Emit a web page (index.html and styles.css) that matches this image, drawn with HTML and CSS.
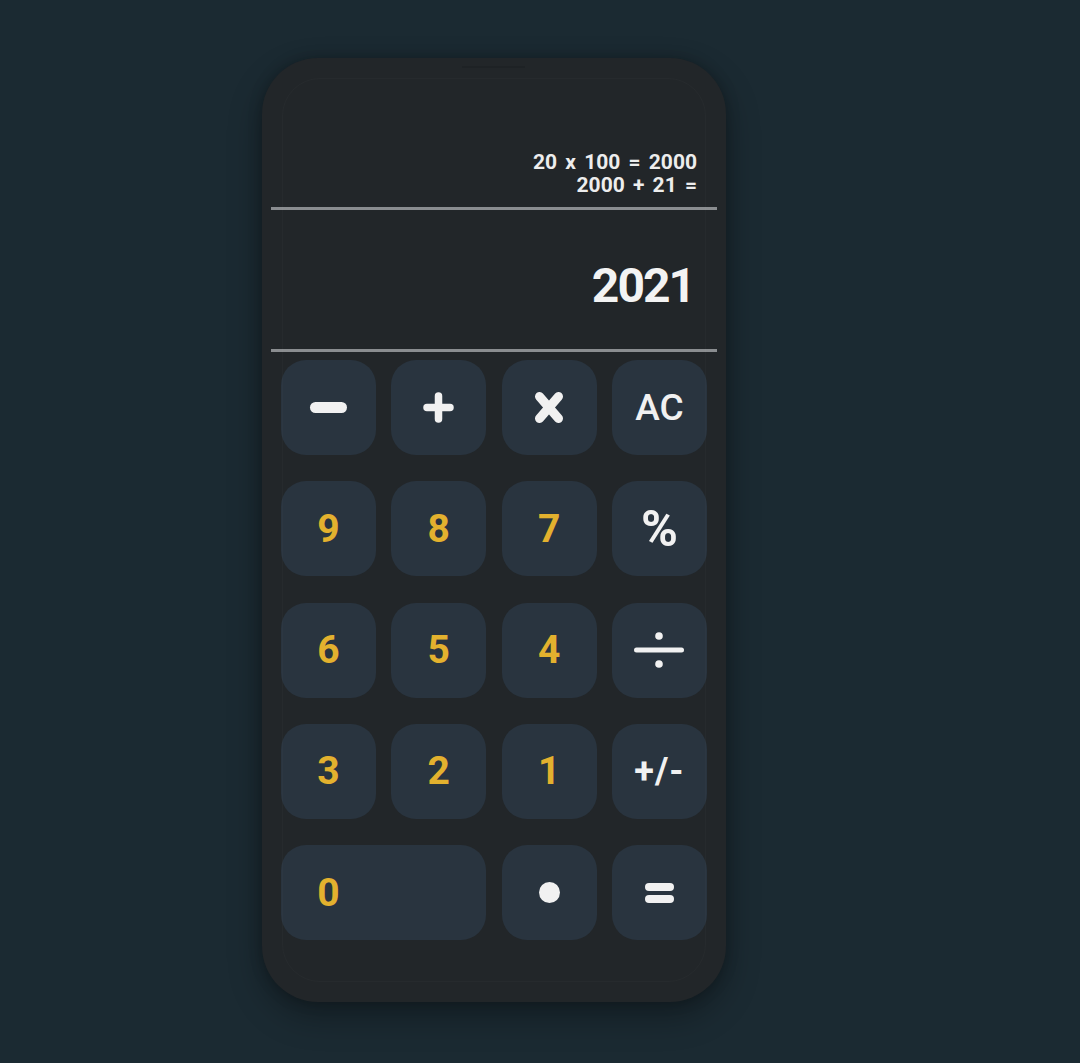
FILE: index.html
```html
<!DOCTYPE html>
<html lang="en">
<head>
<meta charset="utf-8">
<title>Calculator</title>
<link rel="stylesheet" href="styles.css">
</head>
<body>
<div class="phone">
  <div class="history">
    <div class="history-line">20 x 100 = 2000</div>
    <div class="history-line">2000 + 21 =</div>
  </div>
  <div class="divider"></div>
  <div class="display">2021</div>
  <div class="divider"></div>
  <div class="keys">
    <button class="key op" aria-label="minus"><span class="bar-minus"></span></button>
    <button class="key op" aria-label="plus">
      <svg width="31" height="31" viewBox="0 0 31 31"><path d="M15.5 4V27M4 15.5H27" stroke="#f1f1f1" stroke-width="7.5" stroke-linecap="round" fill="none"/></svg>
    </button>
    <button class="key op" aria-label="multiply">
      <svg width="30" height="33" viewBox="0 0 30 33"><path d="M5.5 5.5L24.5 27.5M24.5 5.5L5.5 27.5" stroke="#f1f1f1" stroke-width="9" stroke-linecap="round" fill="none"/></svg>
    </button>
    <button class="key op text">AC</button>

    <button class="key num">9</button>
    <button class="key num">8</button>
    <button class="key num">7</button>
    <button class="key op percent">%</button>

    <button class="key num">6</button>
    <button class="key num">5</button>
    <button class="key num">4</button>
    <button class="key op" aria-label="divide">
      <svg width="50" height="36" viewBox="0 0 50 36"><path d="M2.5 18H47.5" stroke="#f1f1f1" stroke-width="5" stroke-linecap="round" fill="none"/><circle cx="25" cy="4" r="3.8" fill="#f1f1f1"/><circle cx="25" cy="32" r="3.8" fill="#f1f1f1"/></svg>
    </button>

    <button class="key num">3</button>
    <button class="key num">2</button>
    <button class="key num">1</button>
    <button class="key op sign">+/-</button>

    <button class="key num zero"><span class="zero-label">0</span></button>
    <button class="key op" aria-label="decimal"><span class="dot"></span></button>
    <button class="key op" aria-label="equals">
      <span class="eq"><span class="eq-bar"></span><span class="eq-bar"></span></span>
    </button>
  </div>
</div>
</body>
</html>
```
FILE: styles.css
```css
html, body {
  margin: 0;
  padding: 0;
}
body {
  background: #1b2a32;
  font-family: Roboto, "Noto Sans", sans-serif;
  min-height: 1063px;
}
.phone {
  position: relative;
  box-sizing: border-box;
  width: 464px;
  height: 944px;
  margin: 58px 0 0 262px;
  padding: 0 9px;
  border-radius: 56px;
  background: #222629;
  box-shadow: 0 14px 34px rgba(0, 0, 0, 0.32), 0 0 14px rgba(0, 0, 0, 0.22);
  display: flex;
  flex-direction: column;
}
.phone::before {
  content: "";
  position: absolute;
  left: 20px;
  right: 20px;
  top: 20px;
  bottom: 20px;
  border: 1px solid rgba(255, 255, 255, 0.018);
  border-radius: 38px;
  pointer-events: none;
}
.phone::after {
  content: "";
  position: absolute;
  left: 200px;
  top: 8px;
  width: 63px;
  height: 2px;
  border-radius: 2px;
  background: #1e2225;
}
.history {
  height: 149px;
  box-sizing: border-box;
  display: flex;
  flex-direction: column;
  justify-content: flex-end;
  align-items: flex-end;
  padding: 0 20px 10px 0;
  color: #ededed;
  font-weight: 700;
  font-size: 21px;
  line-height: 23px;
  word-spacing: 3px;
}
.divider {
  height: 3px;
  background: #8a8d90;
  flex: none;
}
.display {
  height: 139px;
  box-sizing: border-box;
  display: flex;
  align-items: center;
  justify-content: flex-end;
  padding: 12px 23px 0 0;
  color: #f3f3f3;
  font-size: 48px;
  font-weight: 700;
  letter-spacing: -2px;
}
.keys {
  display: grid;
  grid-template-columns: repeat(4, 95px);
  grid-auto-rows: 95px;
  column-gap: 15.3px;
  row-gap: 26.25px;
  padding: 8px 0 0 10px;
}
.key {
  border: none;
  margin: 0;
  padding: 0;
  border-radius: 25px;
  background: #29343f;
  display: flex;
  align-items: center;
  justify-content: center;
  font-family: Roboto, "Noto Sans", sans-serif;
  font-weight: 700;
  cursor: pointer;
}
.num {
  color: #e3b12e;
  font-size: 39px;
}
.op {
  color: #f1f1f1;
}
.text {
  font-size: 37px;
  font-weight: 500;
}
.percent {
  font-size: 50px;
}
.sign {
  font-size: 36px;
  letter-spacing: 1px;
}
.bar-minus {
  width: 37px;
  height: 11px;
  border-radius: 6px;
  background: #f1f1f1;
}
.zero {
  grid-column: span 2;
  justify-content: flex-start;
}
.zero-label {
  width: 95px;
  text-align: center;
}
.dot {
  width: 21px;
  height: 21px;
  border-radius: 50%;
  background: #f1f1f1;
}
.eq {
  display: flex;
  flex-direction: column;
  gap: 4px;
}
.eq-bar {
  width: 29px;
  height: 8px;
  border-radius: 4px;
  background: #f1f1f1;
}
```
